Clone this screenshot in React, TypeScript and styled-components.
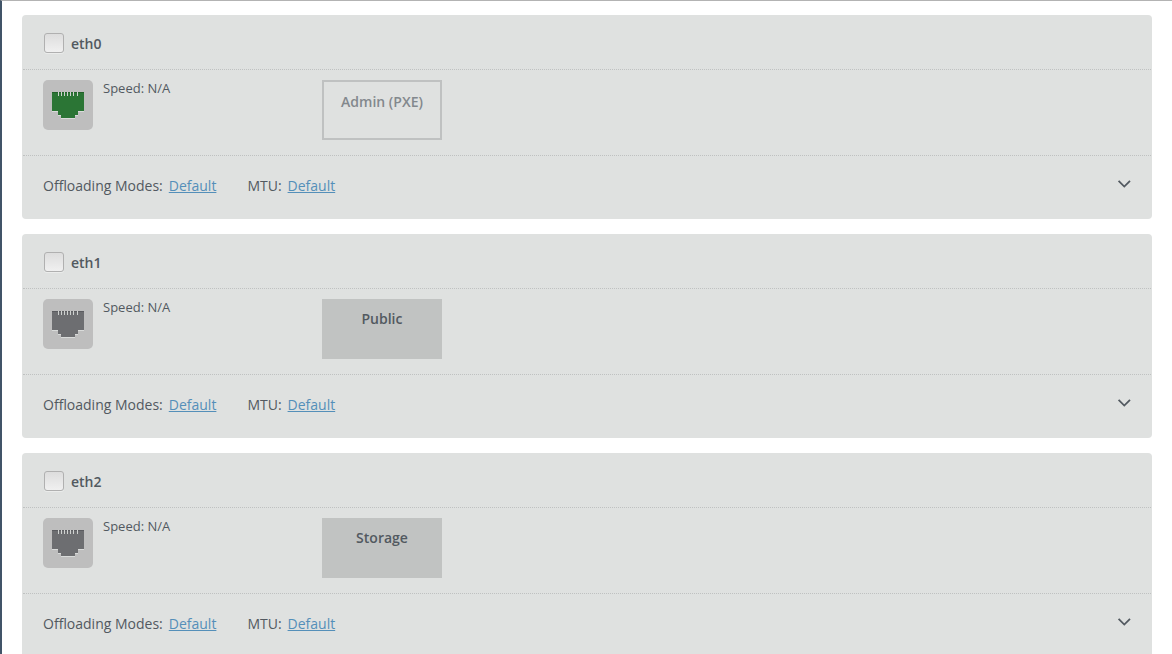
import React from 'react';
import styled, { createGlobalStyle } from 'styled-components';

const GlobalStyle = createGlobalStyle`
  * { box-sizing: border-box; }
  body {
    margin: 0;
    background: #ffffff;
    color: #525960;
    font-family: "Open Sans", "Liberation Sans", sans-serif;
    font-size: 14px;
    line-height: 20px;
  }
`;

const Page = styled.main`
  display: flex;
  flex-direction: column;
  gap: 15px;
  height: 100vh;
  overflow: hidden;
  padding: 14px 20px 0;
  border-top: 1px solid #b3b3b3;
  border-left: 2px solid #415468;
`;

const Card = styled.section`
  flex: none;
  padding: 0 1px;
  border-radius: 4px;
  background: #dfe1e0;
`;

const CardHeader = styled.header`
  display: flex;
  align-items: center;
  height: 55px;
  padding: 2px 20px 0;
  border-bottom: 1px dotted #bfc1c1;
`;

const NameLabel = styled.label`
  display: flex;
  align-items: center;
  gap: 7px;
  padding-left: 1px;
  font-weight: 600;
`;

const Name = styled.span`
  padding-top: 2px;
`;

const Checkbox = styled.input`
  appearance: none;
  width: 20px;
  height: 20px;
  margin: 0;
  border: 1px solid #b0b0b0;
  border-radius: 3px;
  background: linear-gradient(#dddddd, #f0f0f0);
  box-shadow: 0 1px 0 #ebeceb;
`;

const CardBody = styled.div`
  display: flex;
  align-items: flex-start;
  height: 86px;
  padding: 10px 20px;
  border-bottom: 1px dotted #bfc1c1;
`;

const PortBox = styled.div`
  display: flex;
  width: 50px;
  height: 50px;
  border-radius: 5px;
  background: #bebebe;
`;

const Speed = styled.div`
  width: 229px;
  padding-left: 10px;
  font-size: 13px;
  line-height: 16px;
`;

const Network = styled.div<{ $locked?: boolean }>`
  width: 120px;
  height: 60px;
  padding-top: 10px;
  border: ${p => (p.$locked ? '2px solid #bfc1c1' : '0')};
  background: ${p => (p.$locked ? 'transparent' : '#c1c3c2')};
  color: ${p => (p.$locked ? '#83888d' : '#525960')};
  font-weight: 600;
  text-align: center;
`;

const CardFooter = styled.footer`
  display: flex;
  align-items: center;
  height: 63px;
  padding: 0 20px 4px;
`;

const Property = styled.div`
  display: flex;
  gap: 6px;
  margin-right: 31px;
`;

const ValueLink = styled.a`
  color: #548fb9;
  text-decoration: underline;
`;

const ExpandButton = styled.button`
  display: flex;
  margin-left: auto;
  padding: 0 0 4px;
  border: 0;
  background: none;
  color: #525960;
`;

const PORT = 'M9 12h32v19h-6v4h-3v3h-14v-3h-3v-4h-6z';
const CONTACTS = [15, 18, 21, 24, 27, 30, 34];

function PortIcon({ up }: { up: boolean }) {
  const color = up ? '#2b7535' : '#6d6e71';
  const edge = up ? '#226029' : '#5b5c60';
  return (
    <svg width="50" height="50" viewBox="0 0 50 50" shapeRendering="crispEdges" aria-hidden="true">
      <path d={PORT} transform="translate(0 1)" fill="#d9dbda" />
      <path d={PORT} fill={color} />
      <path d="M9 12h32v1h-32z" fill={edge} />
      {CONTACTS.map(x => <rect key={x} x={x} y="12" width="1" height="4" fill="#cfd2d0" />)}
    </svg>
  );
}

type Interface = { name: string; network: string; up: boolean; locked: boolean };

const interfaces: Interface[] = [
  { name: 'eth0', network: 'Admin (PXE)', up: true, locked: true },
  { name: 'eth1', network: 'Public', up: false, locked: false },
  { name: 'eth2', network: 'Storage', up: false, locked: false },
];

function InterfaceCard({ name, network, up, locked }: Interface) {
  return (
    <Card>
      <CardHeader>
        <NameLabel>
          <Checkbox type="checkbox" />
          <Name>{name}</Name>
        </NameLabel>
      </CardHeader>
      <CardBody>
        <PortBox><PortIcon up={up} /></PortBox>
        <Speed>Speed: N/A</Speed>
        <Network $locked={locked}>{network}</Network>
      </CardBody>
      <CardFooter>
        <Property>Offloading Modes: <ValueLink href="#offloading">Default</ValueLink></Property>
        <Property>MTU: <ValueLink href="#mtu">Default</ValueLink></Property>
        <ExpandButton type="button" aria-label={`Expand ${name}`}>
          <svg width="14" height="10" viewBox="0 0 14 10" fill="none" stroke="currentColor" strokeWidth="1.8" aria-hidden="true">
            <path d="M1.6 1.9L7.3 7.6L13 1.9" />
          </svg>
        </ExpandButton>
      </CardFooter>
    </Card>
  );
}

export default function App() {
  return (
    <>
      <GlobalStyle />
      <Page>
        {interfaces.map(item => <InterfaceCard key={item.name} {...item} />)}
      </Page>
    </>
  );
}
